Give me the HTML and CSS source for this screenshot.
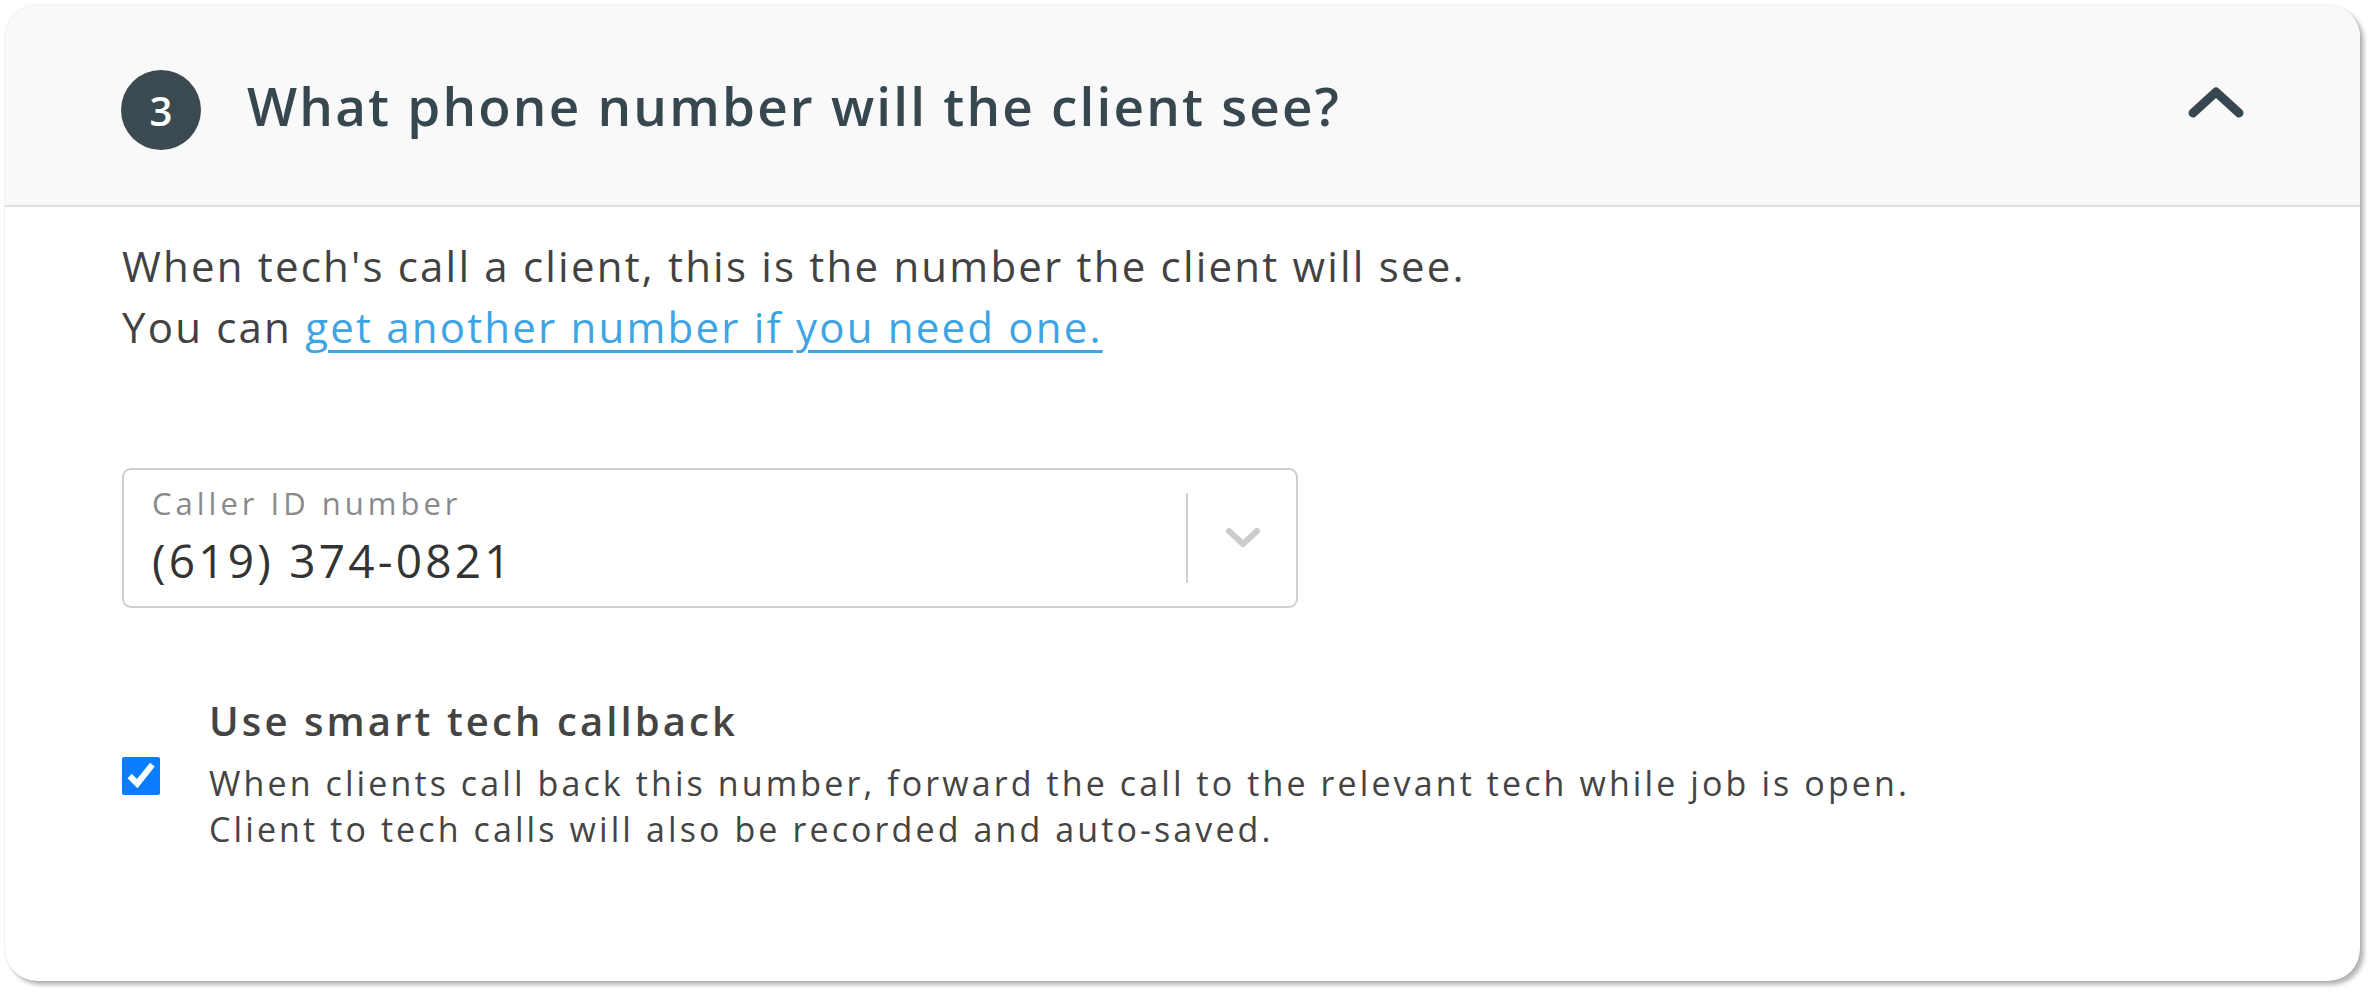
FILE: index.html
```html
<!DOCTYPE html>
<html>
<head>
    <title>Caller ID</title>
    <link rel="stylesheet" href="styles.css">
</head>
<body>
    <div class="card">
        <div class="card-header">
            <span class="step">3</span>
            <h2 class="card-title">What phone number will the client see?</h2>
            <svg class="toggle" width="58" height="34" viewBox="0 0 58 34">
                <polyline points="6,28 29,7 52,28" fill="none" stroke="#37474f" stroke-width="9" stroke-linecap="round" stroke-linejoin="round"/>
            </svg>
        </div>
        <div class="card-body">
            <p class="intro">When tech's call a client, this is the number the client will see.<br>You can <a href="#">get another number if you need one.</a></p>

            <div class="select">
                <div class="select-value">
                    <span class="select-label">Caller ID number</span>
                    <span class="select-number">(619) 374-0821</span>
                </div>
                <span class="select-sep"></span>
                <svg class="select-arrow" width="38" height="24" viewBox="0 0 38 24">
                    <polyline points="5,5 19,18 33,5" fill="none" stroke="#cccccc" stroke-width="6" stroke-linecap="round" stroke-linejoin="round"/>
                </svg>
            </div>

            <div class="callback">
                <div class="callback-title">Use smart tech callback</div>
                <input type="checkbox" class="callback-check" checked>
                <p class="callback-desc">When clients call back this number, forward the call to the relevant tech while job is open.<br>Client to tech calls will also be recorded and auto-saved.</p>
            </div>
        </div>
    </div>
</body>
</html>
```

FILE: styles.css
```css
body {
    font-family: 'Open Sans', 'Liberation Sans', sans-serif;
    background-color: #fff;
    color: #444;
    margin: 0;
    padding: 5px 14px 14px 5px;
}
.card {
    background-color: #fff;
    border-radius: 32px;
    overflow: hidden;
    box-shadow: 0 0 2px rgba(0,0,0,0.18), 4px 4px 4px rgba(0,0,0,0.28);
}
.card-header {
    display: flex;
    align-items: center;
    height: 200px;
    padding: 0 115px 0 116px;
    background-color: #f9f9f9;
    border-bottom: 2px solid #dedede;
}
.step {
    display: flex;
    align-items: center;
    justify-content: center;
    width: 80px;
    height: 80px;
    margin-top: 10px;
    border-radius: 50%;
    background-color: #3b4a51;
    color: #fff;
    font-size: 40px;
    font-weight: 600;
}
.card-title {
    flex: 1;
    margin: 0 0 0 46px;
    color: #37474f;
    font-size: 53px;
    font-weight: 600;
    letter-spacing: 2.2px;
}
.toggle {
    margin-bottom: 6px;
}
.card-body {
    padding: 28px 116px 129px 117px;
}
.intro {
    margin: 0;
    font-size: 42px;
    line-height: 61px;
    letter-spacing: 2.2px;
    color: #424242;
}
.intro a {
    color: #3ea4e4;
    text-decoration-thickness: 3px;
    text-underline-offset: 7px;
}
.select {
    display: flex;
    align-items: center;
    box-sizing: border-box;
    width: 1176px;
    height: 140px;
    margin-top: 111px;
    padding: 15px 0 0 28px;
    border: 2px solid #d0d0d0;
    border-radius: 9px;
}
.select-value {
    flex: 1;
    display: flex;
    flex-direction: column;
    align-self: flex-start;
}
.select-label {
    font-size: 31px;
    line-height: 36px;
    letter-spacing: 4px;
    color: #8a8a8a;
}
.select-number {
    margin-top: 14px;
    font-size: 46px;
    line-height: 50px;
    letter-spacing: 3.2px;
    color: #333;
}
.select-sep {
    width: 2px;
    height: 90px;
    margin-top: -15px;
    background-color: #d0d0d0;
}
.select-arrow {
    margin: -15px 34px 0 36px;
}
.callback {
    display: grid;
    grid-template-columns: 38px 1fr;
    column-gap: 49px;
    margin-top: 88px;
}
.callback-title {
    grid-column: 2;
    font-size: 40px;
    font-weight: 600;
    line-height: 50px;
    letter-spacing: 3.1px;
    color: #444;
}
.callback-check {
    grid-column: 1;
    grid-row: 2;
    width: 38px;
    height: 38px;
    margin: 11px 0 0 0;
    accent-color: #0a7cff;
}
.callback-desc {
    grid-column: 2;
    grid-row: 2;
    margin: 14px 0 0 0;
    font-size: 34px;
    line-height: 46px;
    letter-spacing: 3.1px;
    color: #444;
}
```
